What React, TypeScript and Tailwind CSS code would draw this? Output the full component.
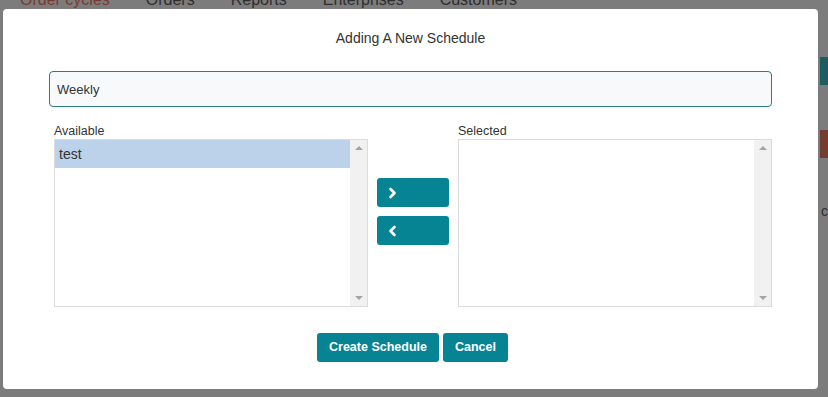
import { useState } from 'react';

const options = ['test'];

function Chevron({ dir }: { dir: 'left' | 'right' }) {
  return (
    <svg width="9" height="12" viewBox="0 0 9 12" className="block">
      <path
        d={dir === 'right' ? 'M2.5 2 L6.5 6 L2.5 10' : 'M6.5 2 L2.5 6 L6.5 10'}
        fill="none"
        stroke="white"
        strokeWidth="2.6"
        strokeLinecap="round"
        strokeLinejoin="round"
      />
    </svg>
  );
}

function ListBox({ items, selected }: { items: string[]; selected?: string }) {
  return (
    <div className="flex h-[168px] w-[314px] border border-[#dcdcdc] bg-white">
      <div className="flex-1">
        {items.map(item => (
          <div
            key={item}
            className={`h-[28px] px-[4px] flex items-center text-[14px] text-[#333] ${
              item === selected ? 'bg-[#bbd2ea]' : ''
            }`}
          >
            {item}
          </div>
        ))}
      </div>
      <div className="w-[17px] bg-[#f1f1f1] flex flex-col justify-between items-center py-[6px]">
        <div className="w-0 h-0 border-x-[4px] border-x-transparent border-b-[4px] border-b-[#a3a3a3]" />
        <div className="w-0 h-0 border-x-[4px] border-x-transparent border-t-[4px] border-t-[#a3a3a3]" />
      </div>
    </div>
  );
}

export default function App() {
  const [name, setName] = useState('Weekly');

  return (
    <div className="w-[828px] h-[397px] overflow-hidden bg-[#7c7c7c] font-['Liberation_Sans',Arial,sans-serif]">
      {/* page behind the overlay */}
      <div className="flex gap-[36px] pl-[20px] -mt-[9px] h-[18px] text-[16px] leading-[18px] text-[#2e2e2e]">
        <span className="text-[#7b3a33]">Order cycles</span>
        <span>Orders</span>
        <span>Reports</span>
        <span>Enterprises</span>
        <span>Customers</span>
      </div>

      <div className="flex">
        {/* Modal */}
        <div className="ml-[3px] w-[818px] h-[380px] bg-white rounded-[4px] px-[46px] flex flex-col">
          <h2 className="pt-[21px] text-center text-[14px] leading-[16px] text-[#333]">
            Adding A New Schedule
          </h2>

          <input
            value={name}
            onChange={e => setName(e.target.value)}
            className="mt-[25px] h-[36px] w-full rounded-[4px] border border-[#2b7e86] bg-[#f7f9fb] px-[7px] text-[13px] text-[#333] outline-none"
          />

          <div className="mt-[16px] pl-[5px] flex items-start">
            <div>
              <div className="text-[12.5px] leading-[16px] text-[#333]">Available</div>
              <ListBox items={options} selected="test" />
            </div>

            <div className="ml-[9px] mt-[55px] flex flex-col gap-[9px]">
              <button className="w-[72px] h-[29px] rounded-[3px] bg-[#078494] pl-[11px] flex items-center">
                <Chevron dir="right" />
              </button>
              <button className="w-[72px] h-[29px] rounded-[3px] bg-[#078494] pl-[11px] flex items-center">
                <Chevron dir="left" />
              </button>
            </div>

            <div className="ml-[9px]">
              <div className="text-[12.5px] leading-[16px] text-[#333]">Selected</div>
              <ListBox items={[]} />
            </div>
          </div>

          <div className="mt-[26px] flex justify-center gap-[4px] pl-[4px]">
            <button className="h-[29px] w-[122px] rounded-[3px] bg-[#078494] text-white text-[12.5px] font-bold">
              Create Schedule
            </button>
            <button className="h-[29px] w-[65px] rounded-[3px] bg-[#078494] text-white text-[12.5px] font-bold">
              Cancel
            </button>
          </div>
        </div>

        {/* page bits visible at the right edge */}
        <div className="ml-[2px] flex-1 flex flex-col">
          <div className="mt-[48px] h-[28px] bg-[#1d5d62]" />
          <div className="mt-[45px] h-[28px] bg-[#763b31]" />
          <div className="mt-[45px] pl-[1px] text-[14px] leading-[16px] text-[#2e2e2e]">c</div>
        </div>
      </div>
    </div>
  );
}
